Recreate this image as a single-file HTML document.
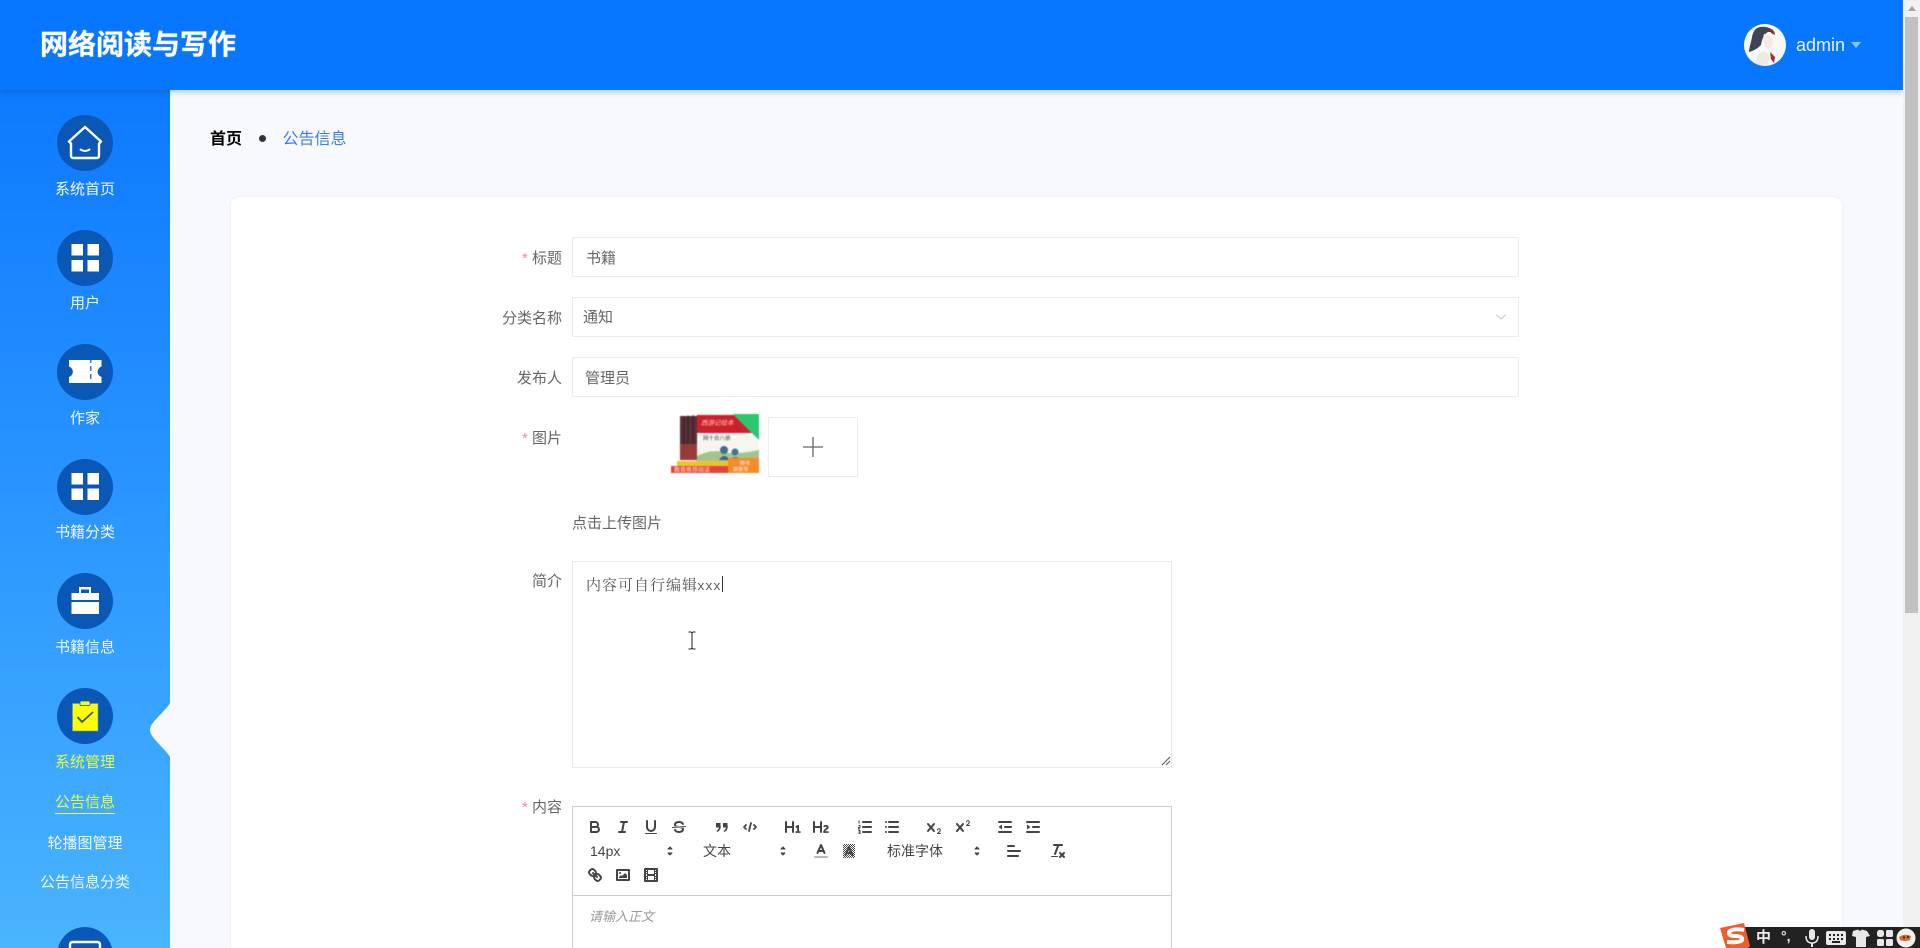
<!DOCTYPE html>
<html lang="zh-CN">
<head>
<meta charset="utf-8">
<title>公告信息</title>
<style>
html,body{margin:0;padding:0;width:1920px;height:948px;overflow:hidden;background:#f7f9ff;font-family:"Liberation Sans","Noto Sans CJK SC",sans-serif}
#w{position:relative;width:1920px;height:948px;overflow:hidden;background:#f7f9ff}
.t{position:absolute;white-space:nowrap;line-height:20px;height:20px}
.a{position:absolute}
.nav{left:0;width:170px;text-align:center;color:#f2f9ff;font-size:15px}
.lab{width:100px;left:462px;text-align:right;color:#666;font-size:15px}
.star{color:#f08a9a;font-size:15px}
.inp{position:absolute;left:572px;width:945px;height:38px;border:1px solid #ececec;background:#fff}
.val{color:#666;font-size:15px}
svg.q{position:absolute;width:18px;height:18px;fill:none;stroke:#444;stroke-width:2;stroke-linecap:round;stroke-linejoin:round}
svg.q .f{fill:#444;stroke:none}
svg.q .th{stroke-width:1}
.tb{color:#444;font-size:14px}
</style>
</head>
<body>
<div id="w">

<!-- main card -->
<div class="a" style="left:231px;top:197px;width:1611px;height:751px;background:#fff;border-radius:8px 8px 0 0;box-shadow:0 0 2px rgba(120,140,190,.16)"></div>

<!-- sidebar -->
<div class="a" style="left:0;top:90px;width:170px;height:858px;background:linear-gradient(180deg,#0d79ff 0%,#49b4ff 100%)"></div>

<svg class="a" style="left:0;top:0" width="170" height="948" viewBox="0 0 170 948">
  <path d="M170 703C165 712 150 722 150 730C150 738 165 748 170 757Z" fill="#f7f9ff"/>
  <g fill="#0b57b5">
    <circle cx="85" cy="143" r="28"/><circle cx="85" cy="258" r="28"/><circle cx="85" cy="372" r="28"/>
    <circle cx="85" cy="487" r="28"/><circle cx="85" cy="601" r="28"/><circle cx="85" cy="716" r="28"/>
    <path d="M57.900 948A28 28 0 0 1 112.100 948Z"/>
  </g>
  <!-- house -->
  <path d="M69 141.500L85 127L101 141.500L99 143.500V155.500Q99 158 96.500 158H73.500Q71 158 71 155.500V143.500Z" fill="none" stroke="#fff" stroke-width="2.400" stroke-linejoin="round"/>
  <path d="M80.500 149.500Q85 152.500 89.500 149.500" fill="none" stroke="#fff" stroke-width="2" stroke-linecap="round"/>
  <g fill="#fff">
    <!-- grid 1 -->
    <rect x="71.500" y="244" width="11.500" height="11.500"/><rect x="87.500" y="244" width="11.500" height="11.500"/>
    <rect x="71.500" y="260" width="11.500" height="11.500"/><rect x="87.500" y="260" width="11.500" height="11.500"/>
    <!-- grid 2 -->
    <rect x="71.500" y="473" width="11.500" height="11.500"/><rect x="87.500" y="473" width="11.500" height="11.500"/>
    <rect x="71.500" y="488.500" width="11.500" height="11.500"/><rect x="87.500" y="488.500" width="11.500" height="11.500"/>
    <!-- ticket -->
    <path d="M69 360H101.500V366.500A5.500 5.500 0 0 0 101.500 377V383H69V377A5.500 5.500 0 0 0 69 366.500Z"/>
    <!-- briefcase -->
    <path d="M71.500 593H79V587H91V593H99V600H71.500ZM81 589.500V593H89V589.500Z" fill-rule="evenodd"/>
    <rect x="71.500" y="602" width="27.500" height="12"/>
  </g>
  <g fill="#0b57b5">
    <rect x="90.200" y="360" width="1.200" height="3"/>
    <rect x="90.200" y="366" width="1.200" height="5"/>
    <rect x="90.200" y="374" width="1.200" height="5"/>
  </g>
  <!-- clipboard -->
  <rect x="72.500" y="703.500" width="25.500" height="27.500" fill="#ffff00" stroke="#4e9bd4" stroke-width=".6"/>
  <rect x="80" y="701" width="10" height="4.500" rx="1" fill="#ffff00" stroke="#0b57b5" stroke-width=".8"/>
  <path d="M77.500 717L82 722L93 712" fill="none" stroke="#3a5570" stroke-width="1.800"/>
  <!-- monitor -->
  <path d="M70 948V945Q70 942 73 942H97Q100 942 100 945V948" fill="none" stroke="#fff" stroke-width="2.400"/>
</svg>

<div class="t nav" style="top:180px">系统首页</div>
<div class="t nav" style="top:294px">用户</div>
<div class="t nav" style="top:409px">作家</div>
<div class="t nav" style="top:523px">书籍分类</div>
<div class="t nav" style="top:638px">书籍信息</div>
<div class="t nav" style="top:753px;color:#e4fb45">系统管理</div>
<div class="t nav" style="top:793px;color:#e4fb45"><span style="border-bottom:1px solid #e4fb45;display:inline-block;line-height:20px;height:20px">公告信息</span></div>
<div class="t nav" style="top:834px">轮播图管理</div>
<div class="t nav" style="top:873px">公告信息分类</div>

<!-- header -->
<div class="a" style="left:0;top:0;width:1903px;height:90px;background:#0877ff;box-shadow:0 2px 6px rgba(30,60,120,.28)"></div>
<div class="a" style="left:40px;top:25px;line-height:40px;font-size:28px;font-weight:700;color:#fff;white-space:nowrap;text-shadow:0 0 1px #fff">网络阅读与写作</div>

<svg class="a" style="left:1744px;top:24px" width="42" height="42" viewBox="0 0 42 42">
  <defs><clipPath id="av"><circle cx="21" cy="21" r="21"/></clipPath></defs>
  <circle cx="21" cy="21" r="21" fill="#fbf9f8"/>
  <g clip-path="url(#av)">
    <path d="M16 3C11 4 9 8 8 13C7 19 5 24 5 28C9 27 13 25 17 21C18 15 20 10 24 8L30 8C27 4 22 2 16 3Z" fill="#3f4452"/>
    <path d="M25 4C29 5 31 8 31 11L27 9Z" fill="#8c2f35"/>
    <path d="M20 10C25 9 29 13 29 18C29 23 26 25 23 25C20 23 18 16 20 10Z" fill="#f6e8e4"/>
    <path d="M26 28L31 33L30 39L27 35Z" fill="#b5281e"/>
    <path d="M14 30L20 27L25 30L24 42H10Z" fill="#ece9e6"/>
  </g>
</svg>
<div class="t" style="left:1796px;top:35px;font-size:18px;color:#e6f3ff">admin</div>
<div class="a" style="left:1851px;top:42px;width:0;height:0;border-left:5px solid transparent;border-right:5px solid transparent;border-top:6px solid #8fc6ff"></div>

<!-- scrollbar -->
<div class="a" style="left:1903px;top:0;width:17px;height:948px;background:#f1f1f1"></div>
<div class="a" style="left:1905px;top:17px;width:13px;height:596px;background:#c1c1c1"></div>
<div class="a" style="left:1908px;top:6px;width:0;height:0;border-left:4px solid transparent;border-right:4px solid transparent;border-bottom:5px solid #a3a3a3"></div>

<!-- breadcrumb -->
<div class="t" style="left:210px;top:130px;font-size:16px;font-weight:700;color:#000">首页</div>
<div class="a" style="left:259px;top:135px;width:7px;height:7px;border-radius:50%;background:#333"></div>
<div class="t" style="left:282.500px;top:130px;font-size:16px;color:#3a80dc">公告信息</div>

<!-- form -->
<div class="t lab" style="top:249px"><span class="star">*</span> 标题</div>
<div class="inp" style="top:237px"></div>
<div class="t val" style="left:586px;top:249px">书籍</div>

<div class="t lab" style="top:309px">分类名称</div>
<div class="inp" style="top:297px"></div>
<div class="t val" style="left:583px;top:308px">通知</div>
<svg class="a" style="left:1495px;top:313px" width="12" height="8" viewBox="0 0 12 8"><path d="M1 1.500L6 6L11 1.500" fill="none" stroke="#c4c7cc" stroke-width="1"/></svg>

<div class="t lab" style="top:369px">发布人</div>
<div class="inp" style="top:357px"></div>
<div class="t val" style="left:585px;top:369px">管理员</div>

<div class="t lab" style="top:429px"><span class="star">*</span> 图片</div>

<!-- book thumbnail -->
<svg class="a" style="left:671px;top:414px;filter:blur(.4px)" width="88" height="59" viewBox="0 0 88 59">
  <rect width="88" height="59" fill="#fff"/>
  <rect x="9" y="2" width="17" height="44" fill="#5c2f38"/>
  <path d="M13 2V46M17 1.500V46M22 1V46" stroke="#2a2025" stroke-width="1"/>
  <rect x="9" y="30" width="17" height="16" fill="#a8403a" opacity=".8"/>
  <rect x="26" y="0" width="62" height="47" fill="#f7f5ef"/>
  <path d="M26 1H63L81 19H26Z" fill="#cf1f2e"/>
  <path d="M62 0H88V26Z" fill="#29c76f"/>
  <text x="30" y="11" font-size="6.500" fill="#f8dca0" font-family="Liberation Sans,Noto Sans CJK SC,sans-serif" font-style="italic">西游记绘本</text>
  <text x="32" y="26" font-size="5.500" fill="#444" font-family="Liberation Sans,Noto Sans CJK SC,sans-serif">网十合八册</text>
  <path d="M26 42Q40 35 52 38T88 36V47H26Z" fill="#a5c48d"/>
  <circle cx="53" cy="36" r="4" fill="#3f6d94"/><circle cx="64" cy="38" r="3.500" fill="#42759a"/>
  <path d="M48 46Q53 38 59 46ZM59 46Q64 40 70 46Z" fill="#37668e"/>
  <rect x="6" y="47" width="51" height="5" fill="#f1c230"/>
  <rect x="0" y="52" width="57" height="7" fill="#e6433a"/>
  <text x="3" y="58" font-size="6" fill="#ffe9c4" font-family="Liberation Sans,Noto Sans CJK SC,sans-serif">教育推荐阅读</text>
  <rect x="57" y="44" width="31" height="15" fill="#f78a2b"/>
  <text x="69" y="51" font-size="5" fill="#fff" font-family="Liberation Sans,Noto Sans CJK SC,sans-serif">随书</text>
  <text x="62" y="57" font-size="5" fill="#fff" font-family="Liberation Sans,Noto Sans CJK SC,sans-serif">审读书</text>
</svg>

<div class="a" style="left:768px;top:417px;width:88px;height:58px;border:1px solid #ececec;background:#fff"></div>
<svg class="a" style="left:803px;top:437px" width="20" height="20" viewBox="0 0 20 20"><path d="M10 0V20M0 10H20" stroke="#666" stroke-width="1.300"/></svg>

<div class="t val" style="left:572px;top:514px">点击上传图片</div>

<div class="t lab" style="top:572px">简介</div>
<div class="a" style="left:572px;top:561px;width:598px;height:205px;border:1px solid #ebebeb;background:#fff"></div>
<div class="t" style="left:586px;top:575px;font-size:15px;letter-spacing:1px;color:#555;font-family:'Noto Serif CJK SC','Liberation Serif',serif">内容可自行编辑<span style="font-family:'Liberation Mono',monospace;font-size:13px;letter-spacing:.2px;margin-left:-1px">xxx</span></div>
<div class="a" style="left:722px;top:576px;width:1px;height:16px;background:#333"></div>
<!-- I-beam -->
<svg class="a" style="left:687px;top:631px" width="10" height="19" viewBox="0 0 10 19"><path d="M1.500 1H4L5 2L6 1H8.500M5 2V17M1.500 18H4L5 17L6 18H8.500" fill="none" stroke="#222" stroke-width="1"/></svg>
<!-- resize handle -->
<svg class="a" style="left:1161px;top:756px" width="10" height="10" viewBox="0 0 10 10"><path d="M9 1L1 9M9 5L5 9" stroke="#555" stroke-width="1"/></svg>

<div class="t lab" style="top:798px"><span class="star">*</span> 内容</div>

<!-- Quill editor -->
<div class="a" style="left:572px;top:806px;width:598px;height:88px;border:1px solid #ccc;background:#fff"></div>
<div class="a" style="left:572px;top:896px;width:598px;height:52px;border:1px solid #ccc;border-top:none;border-bottom:none;background:#fff"></div>
<div class="t" style="left:589px;top:907px;font-size:13px;font-style:italic;color:#999">请输入正文</div>

<!-- row 1 -->
<svg class="q" viewBox="0 0 18 18" style="left:586px;top:818px"><path d="M5,4H9.500A2.500,2.500,0,0,1,12,6.500v0A2.500,2.500,0,0,1,9.500,9H5A0,0,0,0,1,5,9V4A0,0,0,0,1,5,4Z"/><path d="M5,9h5.500A2.500,2.500,0,0,1,13,11.500v0A2.500,2.500,0,0,1,10.500,14H5a0,0,0,0,1,0,0V9A0,0,0,0,1,5,9Z"/></svg>
<svg class="q" viewBox="0 0 18 18" style="left:614px;top:818px"><path d="M7 4H13M5 14H11M8 14L10 4"/></svg>
<svg class="q" viewBox="0 0 18 18" style="left:642px;top:818px"><path d="M5,3V9a4.006,4.006,0,0,0,4,4H9a4.006,4.006,0,0,0,4-4V3"/><rect class="f" height="1" rx=".5" ry=".5" width="12" x="3" y="15"/></svg>
<svg class="q" viewBox="0 0 18 18" style="left:670px;top:818px"><path class="th" d="M15.500 8.500L2.500 9.500"/><path class="f" d="M9.007,8C6.542,7.791,6,7.519,6,6.500,6,5.792,7.283,5,9,5c1.571,0,2.765.679,2.969,1.309a1,1,0,0,0,1.900-.617C13.356,4.106,11.354,3,9,3,6.200,3,4,4.538,4,6.500a3.200,3.200,0,0,0,.5,1.843Z"/><path class="f" d="M8.984,10C11.457,10.208,12,10.479,12,11.500c0,.708-1.283,1.500-3,1.500-1.571,0-2.765-.679-2.969-1.309a1,1,0,1,0-1.900.617C4.644,13.894,6.646,15,9,15c2.800,0,5-1.538,5-3.500a3.200,3.200,0,0,0-.5-1.843Z"/></svg>
<svg class="q" viewBox="0 0 18 18" style="left:713px;top:818px"><rect class="f" x="3" y="5" width="4.500" height="4.500"/><rect class="f" x="10" y="5" width="4.500" height="4.500"/><path stroke-width="1.600" d="M7 8.500C7 11 6 12 4.500 13M14 8.500C14 11 13 12 11.500 13"/></svg>
<svg class="q" viewBox="0 0 18 18" style="left:741px;top:818px"><path d="M5 7L3 9L5 11M13 7L15 9L13 11M10 5L8 13" stroke-width="1.800"/></svg>
<svg class="q" viewBox="0 0 18 18" style="left:784px;top:818px"><path class="f" d="M10,4V14a1,1,0,0,1-2,0V10H3v4a1,1,0,0,1-2,0V4A1,1,0,0,1,3,4V8H8V4a1,1,0,0,1,2,0Zm6.068,9.209H14.990V7.599a.541.541,0,0,0-.605-.605h-.627a1.011,1.011,0,0,0-.748.297L11.645,8.566a.544.544,0,0,0-.022.858l.286.308a.539.539,0,0,0,.847.033l.099-.088a1.214,1.214,0,0,0,.242-.353h.022s-.011.309-.011.605V13.209H12.041a.541.541,0,0,0-.605.605v.439a.541.541,0,0,0,.605.605h4.027a.541.541,0,0,0,.605-.605v-.439A.541.541,0,0,0,16.068,13.209Z"/></svg>
<svg class="q" viewBox="0 0 18 18" style="left:812px;top:818px"><path class="f" d="M16.740,13.814v.439a.541.541,0,0,1-.605.605H11.855a.584.584,0,0,1-.649-.605V14.013c0-2.905,3.399-3.422,3.399-4.555a.777.777,0,0,0-.847-.781,1.177,1.177,0,0,0-.836.385c-.275.264-.561.374-.858.132l-.429-.341c-.308-.242-.385-.518-.154-.814a2.972,2.972,0,0,1,2.454-1.177,2.454,2.454,0,0,1,2.684,2.409c0,2.453-3.179,2.927-3.278,3.938h2.794A.541.541,0,0,1,16.740,13.814ZM9,3A1,1,0,0,0,8,4V8H3V4A1,1,0,0,0,1,4V14a1,1,0,0,0,2,0V10H8v4a1,1,0,0,0,2,0V4A1,1,0,0,0,9,3Z"/></svg>
<svg class="q" viewBox="0 0 18 18" style="left:856px;top:818px"><path d="M7 4H15M7 9H15M7 14H15"/><path class="th" d="M3 2.500V5.500M2.500 7.500H4V9.500H2.500V11H4M2.500 12.500H4V15.500H2.500M2.500 14H4" stroke-linecap="butt" stroke-linejoin="miter"/></svg>
<svg class="q" viewBox="0 0 18 18" style="left:883px;top:818px"><path d="M6 4H15M6 9H15M6 14H15M3 4H3M3 9H3M3 14H3"/></svg>
<svg class="q" viewBox="0 0 18 18" style="left:925px;top:818px"><path class="f" d="M15.500,15H13.861a3.858,3.858,0,0,0,1.914-2.975,1.800,1.800,0,0,0-1.600-1.751A1.921,1.921,0,0,0,12.021,11.700a.5,.5,0,1,0,.957.291.914,.914,0,0,1,1.053-.725.81,.81,0,0,1,.744.762c0,1.076-1.170,1.870-1.940,2.431A1.456,1.456,0,0,0,12,15.500a.5,.5,0,0,0,.5.5h3A.5,.5,0,0,0,15.500,15Z"/><path class="f" d="M9.650,5.241a1,1,0,0,0-1.409.108L6,7.964,3.759,5.349A1,1,0,0,0,2.241,6.651L4.684,9.500,2.241,12.350A1,1,0,0,0,3.759,13.650L6,11.036,8.241,13.650a1,1,0,1,0,1.519-1.300L7.316,9.500,9.759,6.651A1,1,0,0,0,9.650,5.241Z"/></svg>
<svg class="q" viewBox="0 0 18 18" style="left:954px;top:818px"><path class="f" d="M15.500,7H13.861a4.015,4.015,0,0,0,1.914-2.975,1.800,1.800,0,0,0-1.600-1.751A1.922,1.922,0,0,0,12.021,3.700a.5,.5,0,1,0,.957.291.917,.917,0,0,1,1.053-.725.81,.81,0,0,1,.744.762c0,1.077-1.164,1.925-1.934,2.486A1.423,1.423,0,0,0,12,7.500a.5,.5,0,0,0,.5.5h3A.5,.5,0,0,0,15.500,7Z"/><path class="f" d="M9.651,5.241a1,1,0,0,0-1.410.108L6,7.964,3.759,5.349a1,1,0,1,0-1.519,1.300L4.683,9.500,2.241,12.350a1,1,0,1,0,1.519,1.300L6,11.036,8.241,13.650a1,1,0,0,0,1.519-1.300L7.317,9.500,9.759,6.651A1,1,0,0,0,9.651,5.241Z"/></svg>
<svg class="q" viewBox="0 0 18 18" style="left:996px;top:818px"><path d="M3 14H15M3 4H15M9 9H15"/><path class="f" d="M6 6.500V11.500L2.500 9Z"/></svg>
<svg class="q" viewBox="0 0 18 18" style="left:1024px;top:818px"><path d="M3 14H15M3 4H15M9 9H15"/><path class="f" d="M3 6.500V11.500L6.500 9Z"/></svg>

<!-- row 2 -->
<div class="t tb" style="left:590px;top:841px">14px</div>
<svg class="q" viewBox="0 0 18 18" style="left:661px;top:842px"><path class="f" d="M7 11L9 13L11 11ZM7 7L9 5L11 7Z" style="stroke:#444;stroke-width:1"/></svg>
<div class="t tb" style="left:703px;top:841px">文本</div>
<svg class="q" viewBox="0 0 18 18" style="left:774px;top:842px"><path class="f" d="M7 11L9 13L11 11ZM7 7L9 5L11 7Z" style="stroke:#444;stroke-width:1"/></svg>
<svg class="q" viewBox="0 0 18 18" style="left:812px;top:842px"><path d="M3 15H15" style="stroke:#bbb"/><path d="M5.500 11L9 3L12.500 11M11.630 9H6.380" stroke-width="2"/></svg>
<svg class="q" viewBox="0 0 18 18" style="left:840px;top:842px"><defs><pattern id="ck" width="2" height="2" patternUnits="userSpaceOnUse"><rect width="1" height="1" fill="#444" stroke="none"/><rect x="1" y="1" width="1" height="1" fill="#444" stroke="none"/></pattern></defs><rect x="3" y="2" width="12" height="14" fill="url(#ck)" stroke="none"/><path d="M5.500 13L9 5L12.500 13M11.630 11H6.380"/></svg>
<div class="t tb" style="left:887px;top:841px">标准字体</div>
<svg class="q" viewBox="0 0 18 18" style="left:968px;top:842px"><path class="f" d="M7 11L9 13L11 11ZM7 7L9 5L11 7Z" style="stroke:#444;stroke-width:1"/></svg>
<svg class="q" viewBox="0 0 18 18" style="left:1005px;top:842px"><path d="M3 9H15M3 14H13M3 4H9"/></svg>
<svg class="q" viewBox="0 0 18 18" style="left:1049px;top:842px"><path d="M5 3H13M6 12L9.350 3M11 11L15 15M15 11L11 15"/><rect class="f" height="1" rx=".5" ry=".5" width="7" x="2" y="14"/></svg>

<!-- row 3 -->
<svg class="q" viewBox="0 0 18 18" style="left:586px;top:866px"><path d="M7 7L11 11"/><path d="M8.900,4.577a3.476,3.476,0,0,1,.36,4.679A3.476,3.476,0,0,1,4.577,8.900C3.185,7.500,2.035,6.400,4.217,4.217S7.500,3.185,8.900,4.577Z"/><path d="M13.423,9.100a3.476,3.476,0,0,0-4.679-.36,3.476,3.476,0,0,0,.36,4.679c1.392,1.392,2.500,2.542,4.679.36S14.815,10.500,13.423,9.100Z"/></svg>
<svg class="q" viewBox="0 0 18 18" style="left:614px;top:866px"><rect height="10" width="12" x="3" y="4"/><circle class="f" cx="6" cy="7" r="1"/><path class="f" d="M5 12V11L7 9L8 10L11 7L13 9V12Z"/></svg>
<svg class="q" viewBox="0 0 18 18" style="left:642px;top:866px"><rect height="12" width="12" x="3" y="3"/><rect class="f" height="12" width="1" x="5" y="3"/><rect class="f" height="12" width="1" x="12" y="3"/><rect class="f" height="2" width="8" x="5" y="8"/><rect class="f" height="1" width="3" x="3" y="5"/><rect class="f" height="1" width="3" x="3" y="7"/><rect class="f" height="1" width="3" x="3" y="10"/><rect class="f" height="1" width="3" x="3" y="12"/><rect class="f" height="1" width="3" x="12" y="5"/><rect class="f" height="1" width="3" x="12" y="7"/><rect class="f" height="1" width="3" x="12" y="10"/><rect class="f" height="1" width="3" x="12" y="12"/></svg>

<!-- Sogou IME bar -->
<div class="a" style="left:1743px;top:927px;width:177px;height:21px;background:#222"></div>
<svg class="a" style="left:1718px;top:922px" width="34" height="26" viewBox="0 0 34 26">
  <path d="M2 6L26 1L32 24L30 26H8Z" fill="#ee5e26"/>
  <path d="M26 8Q14 6 11 10Q10 14 17 14Q25 14 24 18Q22 21 9 20" fill="none" stroke="#fff" stroke-width="4"/>
</svg>
<div class="t" style="left:1756px;top:928px;font-size:15px;font-weight:700;color:#eee">中</div>
<div class="t" style="left:1781px;top:926px;font-size:14px;font-weight:700;color:#eee">°,</div>
<svg class="a" style="left:1804px;top:928px" width="112" height="20" viewBox="0 0 112 20">
  <g fill="#e8e8e8">
    <rect x="5" y="1" width="6" height="11" rx="3"/>
    <path d="M2 8Q2 15 8 15Q14 15 14 8" fill="none" stroke="#e8e8e8" stroke-width="1.500"/>
    <rect x="7" y="15" width="2" height="4"/>
    <path d="M24 3H40Q42 3 42 5V15Q42 17 40 17H24Q22 17 22 15V5Q22 3 24 3ZM25 6V8H27V6ZM29 6V8H31V6ZM33 6V8H35V6ZM37 6V8H39V6ZM25 10V12H27V10ZM29 10V12H31V10ZM33 10V12H35V10ZM37 10V12H39V10ZM28 13V15H36V13Z" fill-rule="evenodd"/>
    <path d="M49 3L54 1.500Q56 4 58 1.500L63 3L66 8L62 9V19H52V9L48 8Z"/>
    <rect x="73" y="2" width="7" height="7" rx="2.500"/><rect x="82" y="2" width="7" height="7" rx="1.500"/>
    <rect x="73" y="11" width="7" height="7" rx="1.500"/><rect x="82" y="11" width="7" height="7" rx="1.500"/>
    <circle cx="102" cy="10" r="9.500" fill="#f4f0ea"/>
    <path d="M95 9Q101 5 107 8L106 12Q100 14 96 12Z" fill="#d9683a"/>
    <circle cx="100" cy="9.500" r="1.200" fill="#333"/><circle cx="104" cy="9" r="1.200" fill="#333"/>
  </g>
</svg>

</div>
</body>
</html>
